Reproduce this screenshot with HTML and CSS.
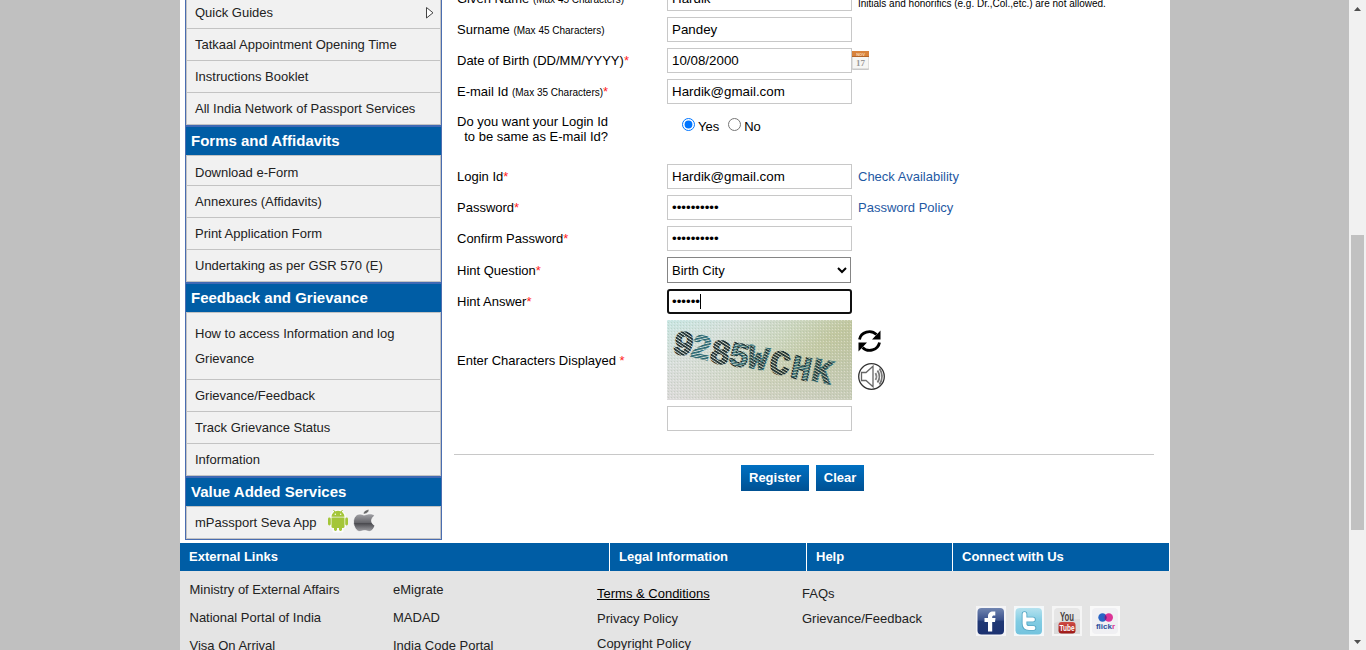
FILE: index.html
```html
<!DOCTYPE html>
<html lang="en">
<head>
<meta charset="utf-8">
<title>Passport Seva - User Registration</title>
<link rel="stylesheet" href="styles.css">
</head>
<body>
<div class="viewport">
  <div class="backdrop">
    <div class="page">
      <div class="main">
        <nav class="sidebar">
          <a class="item more">Quick Guides
            <svg width="9" height="12" viewBox="0 0 9 12"><path d="M1.500.500v10.500l6.500-5.200z" fill="#fff" stroke="#444"/></svg>
          </a>
          <a class="item">Tatkaal Appointment Opening Time</a>
          <a class="item">Instructions Booklet</a>
          <a class="item">All India Network of Passport Services</a>
          <h2 class="group">Forms and Affidavits</h2>
          <a class="item short">Download e-Form</a>
          <a class="item">Annexures (Affidavits)</a>
          <a class="item">Print Application Form</a>
          <a class="item">Undertaking as per GSR 570 (E)</a>
          <h2 class="group">Feedback and Grievance</h2>
          <a class="item tall">How to access Information and log Grievance</a>
          <a class="item">Grievance/Feedback</a>
          <a class="item">Track Grievance Status</a>
          <a class="item">Information</a>
          <h2 class="group">Value Added Services</h2>
          <div class="item apps">mPassport Seva App
            <svg class="android" width="22" height="24" viewBox="0 0 22 24">
              <g fill="none" stroke="#fff" stroke-width="3" stroke-linejoin="round" opacity=".8"><path d="M4.500 8a6.500 5.700 0 0 1 13 0v10h-2.500v4h-3v-4h-2v4h-3v-4h-2.500z"/></g>
              <g fill="#a4c639"><path d="M4.500 7.800a6.500 6 0 0 1 13 0z"/><path d="M4.500 8.600h13v8.900a1.500 1.500 0 0 1-1.500 1.500h-10a1.500 1.500 0 0 1-1.500-1.500z"/><rect x="1" y="8.500" width="2.800" height="8" rx="1.400"/><rect x="18.200" y="8.500" width="2.800" height="8" rx="1.400"/><rect x="7" y="16" width="3" height="6" rx="1.400"/><rect x="12" y="16" width="3" height="6" rx="1.400"/></g>
              <path d="M6.500 1l1.800 2.500M15.500 1l-1.800 2.500" stroke="#a4c639"/><circle cx="8.300" cy="5.200" r=".7" fill="#fff"/><circle cx="13.700" cy="5.200" r=".7" fill="#fff"/>
            </svg>
            <svg class="apple" width="24" height="24" viewBox="0 0 24 24">
              <defs><linearGradient id="steel" x1="0" y1="0" x2="0" y2="1"><stop offset="0" stop-color="#a4a4a8"/><stop offset=".5" stop-color="#66666b"/><stop offset=".55" stop-color="#4b4b50"/><stop offset="1" stop-color="#a2a2a6"/></linearGradient></defs>
              <path d="M12 6c2-.2 3.500-1.200 6-1.200 2.200 0 4 .9 4.800 2-4.700 2.700-4 8 .2 9.800-1.500 3.800-3.500 5.900-5.400 5.900-1.800 0-2.800-.9-5-.9s-3.200.9-5 .9C4.500 22.500 1.500 17.500 1.500 13c0-5 3-8 6.500-8 2 0 3 1 4 1z" fill="url(#steel)" stroke="#fff" stroke-width=".7"/>
              <path d="M11.500 5c-.2-2.300 2.300-4.300 5.500-4.500 0 2.300-2.300 4.500-5.500 4.500z" fill="#666" stroke="#fff" stroke-width=".4"/>
            </svg>
          </div>
        </nav>

        <section class="content">
          <form class="form">
            <label>Given Name <small>(Max 45 Characters)</small></label>
            <input class="field" type="text" value="Hardik">
            <span class="note">Initials and honorifics (e.g. Dr.,Col.,etc.) are not allowed.</span>

            <label>Surname <small>(Max 45 Characters)</small></label>
            <input class="field" type="text" value="Pandey">
            <span></span>

            <label>Date of Birth (DD/MM/YYYY)<b class="req">*</b></label>
            <input class="field" type="text" value="10/08/2000">
            <svg class="calendar" width="18" height="20" viewBox="0 0 18 20">
              <rect x="0" y="0" width="17" height="19" rx="1" fill="#c9c9c9"/><rect x=".5" y="6" width="16" height="11.500" fill="#f6f6f4"/><path d="M0 0h17v6H0z" fill="#d8833c"/><path d="M0 5.500h17" stroke="#b36529"/>
              <text x="8.500" y="4.700" class="cal-month">NOV</text><text x="8.500" y="15.300" class="cal-day">17</text>
            </svg>

            <label>E-mail Id <small>(Max 35 Characters)</small><b class="req">*</b></label>
            <input class="field" type="text" value="Hardik@gmail.com">
            <span></span>

            <label class="question">Do you want your Login Id<br>&nbsp; to be same as E-mail Id?</label>
            <div class="choices">
              <input type="radio" name="same" checked><span>Yes</span>
              <input type="radio" name="same" class="second"><span>No</span>
            </div>
            <span></span>

            <label>Login Id<b class="req">*</b></label>
            <input class="field" type="text" value="Hardik@gmail.com">
            <a class="link">Check Availability</a>

            <label>Password<b class="req">*</b></label>
            <input class="field" type="password" value="abcdefghij">
            <a class="link">Password Policy</a>

            <label>Confirm Password<b class="req">*</b></label>
            <input class="field" type="password" value="abcdefghij">
            <span></span>

            <label>Hint Question<b class="req">*</b></label>
            <select class="select"><option>Birth City</option></select>
            <span></span>

            <label>Hint Answer<b class="req">*</b></label>
            <div class="field focused">••••••<i class="caret"></i></div>
            <span></span>

            <label>Enter Characters Displayed <b class="req">*</b></label>
            <svg class="captcha" width="185" height="80" viewBox="0 0 185 80">
              <defs>
                <linearGradient id="wash" x1="0" y1="0" x2="1" y2=".65"><stop offset="0" stop-color="#c5e8e7"/><stop offset=".28" stop-color="#d5dfdb"/><stop offset=".52" stop-color="#cbd5bd"/><stop offset=".72" stop-color="#c2c7a0"/><stop offset="1" stop-color="#bcc0a0"/></linearGradient>
                <linearGradient id="glow" x1="0" y1="1" x2=".6" y2="0"><stop offset="0" stop-color="#e0dbe0" stop-opacity=".8"/><stop offset="1" stop-color="#d4e0d0" stop-opacity="0"/></linearGradient>
                <pattern id="grain" width="3" height="3" patternUnits="userSpaceOnUse"><rect width="1" height="1" fill="#fff" opacity=".35"/><rect x="1" y="2" width="1" height="1" fill="#8fa98c" opacity=".25"/></pattern>
                <pattern id="dark" width="2.600" height="2.600" patternUnits="userSpaceOnUse" patternTransform="rotate(20)"><rect width="2.600" height="1.500" fill="#172728"/></pattern>
                <pattern id="teal" width="2.600" height="2.600" patternUnits="userSpaceOnUse" patternTransform="rotate(-25)"><rect width="2.600" height="1.500" fill="#266570"/></pattern>
              </defs>
              <rect width="185" height="80" fill="url(#wash)"/><rect width="185" height="80" fill="url(#glow)"/><rect width="185" height="80" fill="url(#grain)"/>
              <g class="glyphs">
                <text transform="translate(4 32) rotate(14)" fill="url(#dark)" stroke="url(#dark)">9</text>
                <text transform="translate(22 36) rotate(12)" fill="url(#teal)" stroke="url(#teal)">2</text>
                <text transform="translate(41 41) rotate(13)" fill="url(#dark)" stroke="url(#dark)">8</text>
                <text transform="translate(60 44) rotate(12)" fill="url(#teal)" stroke="url(#dark)">5</text>
                <text transform="translate(79 47) rotate(11)" fill="url(#dark)" stroke="url(#teal)">W</text>
                <text transform="translate(101 52) rotate(11)" fill="url(#dark)" stroke="url(#dark)">C</text>
                <text transform="translate(122 57) rotate(12)" fill="url(#teal)" stroke="url(#dark)">H</text>
                <text transform="translate(143 60) rotate(12)" fill="url(#dark)" stroke="url(#teal)">K</text>
              </g>
            </svg>
            <div class="captcha-tools">
              <svg width="24" height="24" viewBox="0 0 24 24"><g fill="none" stroke="#000" stroke-width="2.800"><path d="M1.500 10.500A10 9.500 0 0 1 18.500 5.500"/><path d="M21.500 13.500A10 9.500 0 0 1 4.500 18.500"/></g><path d="M22.500 1.500v9h-8.500zM.5 22.500v-9h8.500z"/></svg>
              <svg width="28" height="28" viewBox="0 0 28 28"><g fill="none"><circle cx="13.500" cy="13.500" r="12.800" stroke="#333" stroke-width="1.300"/><path d="M3.500 9.500h4.500l7-6.200v20.400l-7-6.200H3.500z" fill="#fff" stroke="#666" stroke-width="1.300"/><path d="M17.500 10q2 3.500 0 7" stroke="#888" stroke-width="1.800"/><path d="M19.500 7.500q3.800 6 0 12" stroke="#777" stroke-width="1.800"/><path d="M21.500 5.500q5 8 0 16" stroke="#777" stroke-width="1.800"/></g></svg>
            </div>

            <span></span>
            <input class="field" type="text" value="">
            <span></span>
          </form>
          <hr class="rule">
          <div class="actions"><button class="btn">Register</button><button class="btn clear">Clear</button></div>
        </section>
      </div>

      <footer class="footer">
        <div class="foot-heads"><h3>External Links</h3><h3>Legal Information</h3><h3>Help</h3><h3>Connect with Us</h3></div>
        <div class="foot-body">
          <div class="foot-col wide"><a>Ministry of External Affairs</a><a>National Portal of India</a><a>Visa On Arrival</a></div>
          <div class="foot-col wide"><a>eMigrate</a><a>MADAD</a><a>India Code Portal</a></div>
          <div class="foot-col"><a class="active">Terms &amp; Conditions</a><a>Privacy Policy</a><a>Copyright Policy</a></div>
          <div class="foot-col"><a>FAQs</a><a>Grievance/Feedback</a></div>
          <div class="social">
            <svg width="30" height="30" viewBox="0 0 30 30">
              <defs><linearGradient id="fb" x1="0" y1="0" x2="0" y2="1"><stop offset="0" stop-color="#7185b0"/><stop offset=".45" stop-color="#3b518c"/><stop offset=".5" stop-color="#203874"/><stop offset="1" stop-color="#1c3271"/></linearGradient></defs>
              <rect width="30" height="30" fill="#f4f4f6"/><rect x="1.500" y="2" width="26.500" height="26.500" rx="4" fill="url(#fb)"/><path d="M12 25.500V16H8.500V12H12V10.500c0-3.500 2-5 5-5h2.300v4H18c-1.300 0-1.800.6-1.800 1.700V12h3.300l-.5 4h-2.800v9.500z" fill="#fff"/>
            </svg>
            <svg width="30" height="30" viewBox="0 0 30 30">
              <defs><linearGradient id="tw" x1="0" y1="0" x2="0" y2="1"><stop offset="0" stop-color="#b5e2ef"/><stop offset=".5" stop-color="#81cce3"/><stop offset="1" stop-color="#74c3de"/></linearGradient></defs>
              <rect width="30" height="30" fill="#f4f8fa"/><rect x="1.500" y="2" width="26.500" height="26.500" rx="4" fill="url(#tw)"/><g fill="none" stroke-linecap="round"><path d="M10.500 8v9.500q0 4.500 4.500 4.500h4.500M10.500 13.500h8.500" stroke="#58a8c5" stroke-width="5.600"/><path d="M10.500 8v9.500q0 4.500 4.500 4.500h4.500M10.500 13.500h8.500" stroke="#fff" stroke-width="3.800"/></g>
            </svg>
            <svg width="30" height="30" viewBox="0 0 30 30">
              <defs><linearGradient id="yt" x1="0" y1="0" x2="0" y2="1"><stop offset="0" stop-color="#d04c46"/><stop offset="1" stop-color="#9c1715"/></linearGradient></defs>
              <rect width="30" height="30" fill="#f5f5f5"/><rect x="2" y="2" width="26" height="26" rx="4" fill="#e6e6e6"/><path d="M2 28V17q13-4 26-4v15z" fill="#dadada"/><text x="15" y="14.500" class="yt-you" textLength="14" lengthAdjust="spacingAndGlyphs">You</text><rect x="6.500" y="16" width="17" height="11.500" rx="3" fill="url(#yt)"/><text x="15" y="25.200" class="yt-tube" textLength="15" lengthAdjust="spacingAndGlyphs">Tube</text>
            </svg>
            <svg width="30" height="30" viewBox="0 0 30 30">
              <rect width="30" height="30" fill="#f9f9f9"/><rect x="2" y="2" width="26" height="26" rx="4" fill="#f0f0f3"/><circle cx="12.500" cy="11.500" r="4.200" fill="#2864c5"/><circle cx="18.800" cy="11.500" r="4.200" fill="#dc3496"/><path d="M15.600 8.700q2.200 2.800 0 5.600-2.200-2.800 0-5.600z" fill="#63248f"/><text x="15.500" y="22.800" class="flickr">flick<tspan fill="#db3593">r</tspan></text>
            </svg>
          </div>
        </div>
      </footer>
    </div>
  </div>
  <div class="scrollbar">
    <svg width="7" height="4" viewBox="0 0 7 4"><path d="M3.500 0L7 4H0z" fill="#505050"/></svg>
    <div class="thumb"></div>
    <svg width="7" height="4" viewBox="0 0 7 4"><path d="M0 0h7L3.500 4z" fill="#505050"/></svg>
  </div>
</div>
</body>
</html>
```
FILE: styles.css
```css
* { box-sizing: border-box; }
body { margin: 0; overflow: hidden; font: 13px/15px "Liberation Sans", Arial, sans-serif; color: #000; }
.viewport { display: flex; height: 650px; overflow: hidden; }
.backdrop { flex: 1; background: #c0c0c0; padding-left: 180px; overflow: hidden; }
.page { width: 990px; height: 650px; background: #fff; overflow: hidden; display: flex; flex-direction: column; }
.main { display: flex; height: 543px; flex: none; padding-left: 5px; overflow: hidden; align-items: flex-start; }
svg { display: block; flex: none; }

.sidebar { width: 257px; margin-top: -4px; border: 1px solid #4a6db0; background: #f1f1f1; flex: none; }
.item { display: flex; align-items: center; height: 32px; padding: 0 11px 0 8px; border: solid #c3c3c3; border-width: 0 1px 1px; color: #222; line-height: 25px; }
.more { justify-content: space-between; padding-right: 6px; }
.short { height: 30px; padding-top: 4px; }
.tall { height: 67px; padding-right: 40px; }
.group { margin: 0; height: 31px; padding-left: 5px; border-top: 2px solid #3f69b4; border-bottom: 1px solid #c3c3c3; background: #005da5; color: #fff; font-size: 15px; line-height: 28px; }
.android { margin: -4px 0 0 10.500px; }
.apple { margin: -3px 0 0 3px; }

.content { margin-left: 12px; width: 700px; flex: none; }
.form { display: grid; grid-template-columns: 210px 185px 1fr; row-gap: 6px; margin-top: -14px; padding-left: 3px; align-items: center; }
small { font-size: 10px; }
.req { color: #f22; font-weight: normal; }
.field { width: 185px; height: 25px; margin: 0; padding: 0 4px; border: 1px solid #c8c8c8; background: #fff; font: 13.333px/23px "Liberation Sans", Arial, sans-serif; color: #000; outline: 0; }
.note { font-size: 10px; padding: 11px 0 0 6px; white-space: nowrap; line-height: 12px; }
.calendar { margin-top: 1px; }
.cal-month { font: bold 4px "Liberation Sans", sans-serif; fill: #f8d9ba; text-anchor: middle; }
.cal-day { font: bold 9px "Liberation Serif", serif; fill: #999; text-anchor: middle; }
.question { height: 48px; padding-top: 4px; }
.choices { display: flex; height: 48px; align-items: center; padding: 0 0 18px 15px; }
.choices input { width: 13px; height: 13px; margin: -2px 3px 0 0; }
.choices span { margin-top: 2px; }
.choices .second { margin-left: 9px; }
.link { color: #1f59a3; padding-left: 6px; }
.select { width: 184px; height: 26px; margin: 0; padding: 0; border: 1px solid #858585; border-radius: 0; background: #fff; font: 13px "Liberation Sans", Arial, sans-serif; }
.focused { display: flex; align-items: center; border: 2px solid #101010; border-radius: 3px; padding: 0 3px; }
.caret { width: 1px; height: 15px; background: #000; }
.glyphs text { font: bold 34px "Liberation Mono", monospace; stroke-width: 1.6; }
.captcha-tools { display: flex; flex-direction: column; gap: 10px; padding-left: 6px; }
.rule { margin: 23px 0 0; border: 0; border-top: 1px solid #c8c8c8; }
.actions { display: flex; gap: 7px; margin: 10px 0 0 287px; }
.btn { height: 26px; border: 0; padding: 0 8px 2px; background: linear-gradient(#0070c2, #005193); color: #fff; font: bold 13px "Liberation Sans", Arial, sans-serif; }
.clear { width: 48px; padding: 0 0 2px; }

.footer { flex: 1; background: #e4e4e4; }
.foot-heads { display: grid; grid-template-columns: 429px 196px 145px 216px; gap: 1px; height: 28px; background: #fff; }
.foot-heads h3 { margin: 0; padding-left: 9px; background: #005da5; color: #fff; font-size: 13px; line-height: 27px; }
.foot-body { display: grid; grid-template-columns: 203.500px 204px 205px 174px 1fr; padding-left: 9.500px; }
.foot-col { display: flex; flex-direction: column; padding-top: 10px; line-height: 25px; color: #222; white-space: nowrap; }
.wide { padding-top: 5px; line-height: 28px; }
.active { color: #000; text-decoration: underline; }
.social { display: flex; gap: 8px; padding-top: 35px; }
.yt-you { font: bold 12px "Liberation Sans", sans-serif; fill: #474040; text-anchor: middle; }
.yt-tube { font: bold 9px "Liberation Sans", sans-serif; fill: #fff; text-anchor: middle; }
.flickr { font: bold 8px "Liberation Sans", sans-serif; fill: #2b4f9e; text-anchor: middle; }

.scrollbar { width: 17px; flex: none; background: #f1f1f1; display: flex; flex-direction: column; align-items: center; padding: 7px 0 6px; }
.thumb { width: 13px; height: 295px; margin: 224px 0 auto; background: #c1c1c1; flex: none; }
```
